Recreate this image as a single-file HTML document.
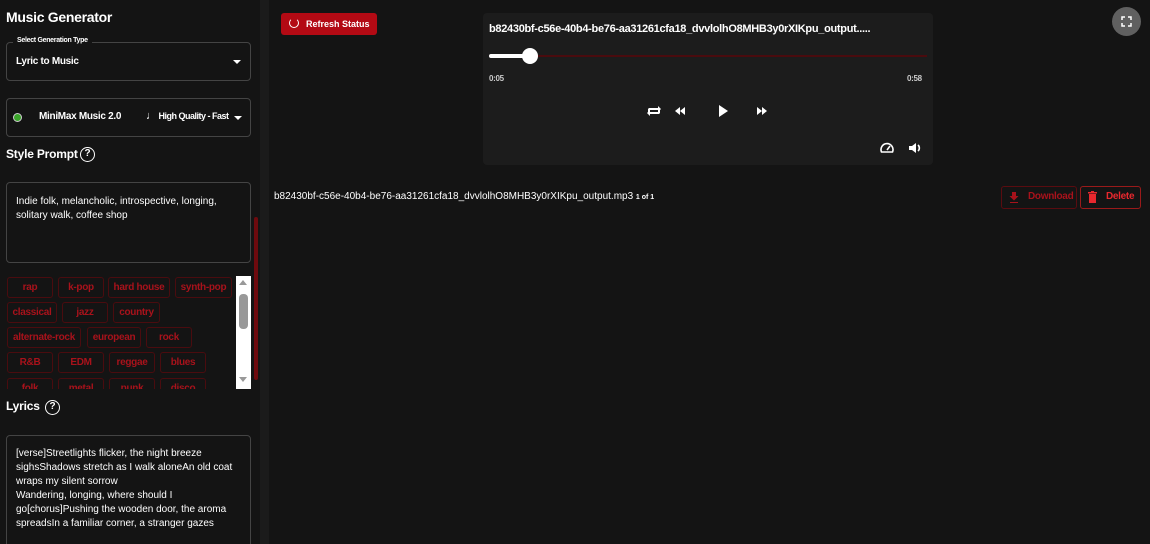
<!DOCTYPE html><html><head><style>
*{box-sizing:border-box;margin:0;padding:0}
html,body{width:1150px;height:544px;overflow:hidden}
body{background:#141414;font-family:"Liberation Sans",sans-serif;color:#fff;position:relative}
.a{position:absolute}
.box{position:absolute;border:1px solid #444;border-radius:4px}
.tag{position:absolute;height:21px;border:1px solid #4a0c0f;border-radius:3px;color:#a8121b;font-size:10px;font-weight:bold;text-align:center;line-height:19px;letter-spacing:-0.3px}
.t{font-weight:bold;letter-spacing:-0.3px}
</style></head><body>
<div class="a" style="left:260px;top:0;width:9px;height:544px;background:#1b1b1b"></div>
<div class="a" style="left:254px;top:217px;width:4px;height:163px;background:#6e0a0e;border-radius:2px"></div>
<div class="a t" style="left:6px;top:9px;font-size:14px">Music Generator</div>
<div class="box" style="left:6px;top:42px;width:245px;height:39px"></div>
<div class="a t" style="left:13px;top:37px;font-size:7px;background:#141414;padding:0 4px">Select Generation Type</div>
<div class="a t" style="left:16px;top:56px;font-size:10px">Lyric to Music</div>
<div class="a" style="left:233px;top:60px;border:4px solid transparent;border-top:4px solid #fff;border-bottom:0"></div>
<div class="box" style="left:6px;top:98px;width:245px;height:39px"></div>
<div class="a" style="left:13px;top:113px;width:9px;height:9px;border-radius:50%;background:#3aa52a;border:1px solid #ccc"></div>
<div class="a t" style="left:39px;top:111px;font-size:10px">MiniMax Music 2.0</div>
<div class="a t" style="left:146px;top:110px;font-size:9px;letter-spacing:-0.5px"><span style="font-size:11px">♩</span> High Quality - Fast</div>
<div class="a" style="left:234px;top:116px;border:4px solid transparent;border-top:4px solid #fff;border-bottom:0"></div>
<div class="a" style="left:6px;top:147px;font-size:12px;font-weight:bold;letter-spacing:-0.2px">Style Prompt</div>
<div class="a" style="left:80px;top:147px;width:15px;height:15px;border:1.5px solid #fff;border-radius:50%;font-size:10px;text-align:center;line-height:12px;font-weight:bold">?</div>
<div class="box" style="left:6px;top:182px;width:245px;height:81px"></div>
<div class="a" style="left:16px;top:195px;font-size:10px;line-height:14px;width:230px">Indie folk, melancholic, introspective, longing, solitary walk, coffee shop</div>
<div class="a" style="left:0;top:275px;width:236px;height:114px;overflow:hidden">
<div class="tag" style="left:7px;top:2px;width:46px">rap</div><div class="tag" style="left:58px;top:2px;width:46px">k-pop</div><div class="tag" style="left:108px;top:2px;width:62px">hard house</div><div class="tag" style="left:175px;top:2px;width:57px">synth-pop</div>
<div class="tag" style="left:7px;top:27px;width:50px">classical</div><div class="tag" style="left:62px;top:27px;width:46px">jazz</div><div class="tag" style="left:113px;top:27px;width:47px">country</div>
<div class="tag" style="left:7px;top:52px;width:74px">alternate-rock</div><div class="tag" style="left:87px;top:52px;width:54px">european</div><div class="tag" style="left:146px;top:52px;width:46px">rock</div>
<div class="tag" style="left:7px;top:77px;width:46px">R&amp;B</div><div class="tag" style="left:58px;top:77px;width:46px">EDM</div><div class="tag" style="left:109px;top:77px;width:46px">reggae</div><div class="tag" style="left:160px;top:77px;width:46px">blues</div>
<div class="tag" style="left:7px;top:103px;width:46px">folk</div><div class="tag" style="left:58px;top:103px;width:46px">metal</div><div class="tag" style="left:109px;top:103px;width:46px">punk</div><div class="tag" style="left:160px;top:103px;width:46px">disco</div>
</div>
<div class="a" style="left:236px;top:276px;width:15px;height:113px;background:#fff"></div>
<div class="a" style="left:239px;top:280px;border:4px solid transparent;border-bottom:5px solid #999;border-top:0"></div>
<div class="a" style="left:239px;top:294px;width:9px;height:35px;background:#999;border-radius:4px"></div>
<div class="a" style="left:239px;top:377px;border:4px solid transparent;border-top:5px solid #999;border-bottom:0"></div>
<div class="a" style="left:6px;top:399px;font-size:12px;font-weight:bold;letter-spacing:-0.2px">Lyrics</div>
<div class="a" style="left:45px;top:400px;width:15px;height:15px;border:1.5px solid #fff;border-radius:50%;font-size:10px;text-align:center;line-height:12px;font-weight:bold">?</div>
<div class="box" style="left:6px;top:435px;width:245px;height:115px"></div>
<div class="a" style="left:16px;top:447px;font-size:10px;line-height:14px;width:230px;height:84px;overflow:hidden">[verse]Streetlights flicker, the night breeze sighsShadows stretch as I walk aloneAn old coat wraps my silent sorrow<br>Wandering, longing, where should I go[chorus]Pushing the wooden door, the aroma spreadsIn a familiar corner, a stranger gazes</div>

<div class="a" style="left:281px;top:13px;width:96px;height:22px;background:#b30a14;border-radius:3px;font-size:9px;font-weight:bold;line-height:22px;padding-left:25px">Refresh Status</div>
<div class="a" style="left:289px;top:18px;width:10px;height:10px;border:1.5px solid #fff;border-radius:50%;border-top-color:transparent"></div>
<div class="a" style="left:483px;top:13px;width:450px;height:152px;background:#1c1c1c;border-radius:4px"></div>
<div class="a t" style="left:489px;top:23px;font-size:11px">b82430bf-c56e-40b4-be76-aa31261cfa18_dvvlolhO8MHB3y0rXIKpu_output.....</div>
<div class="a" style="left:489px;top:55px;width:438px;height:2px;background:#4a0b0e"></div>
<div class="a" style="left:489px;top:54px;width:40px;height:4px;background:#fff;border-radius:2px"></div>
<div class="a" style="left:522px;top:48px;width:16px;height:16px;background:#fff;border-radius:50%"></div>
<div class="a t" style="left:489px;top:74px;font-size:8px;color:#ccc">0:05</div>
<div class="a t" style="left:907px;top:74px;font-size:8px;color:#ccc">0:58</div>
<svg class="a" style="left:645px;top:102px" width="130" height="18" viewBox="0 0 130 18" fill="#fff">
<path d="M4 6h9v-2l3 3-3 3v-2H5v3H3V7zM14 12H5v2l-3-3 3-3v2h8V7h2v4z"/>
<path d="M40 5v8l-5-4zM35 5v8l-5-4z"/>
<path d="M74 3v12l9-6z"/>
<path d="M112 5v8l5-4zM117 5v8l5-4z"/>
</svg>
<svg class="a" style="left:879px;top:140px" width="44" height="16" viewBox="0 0 44 16" fill="none" stroke="#fff" stroke-width="1.6">
<path d="M2.5 12A6 6 0 1 1 13.5 12Z"/><path d="M8 10l3-4"/>
<path d="M30 6h3l4-3v10l-4-3h-3z" fill="#fff" stroke="none"/><path d="M39 5a4 4 0 0 1 0 6"/>
</svg>
<div class="a" style="left:1112px;top:7px;width:29px;height:29px;border-radius:50%;background:#606060"></div>
<svg class="a" style="left:1121px;top:16px" width="11" height="11" viewBox="0 0 11 11" fill="none" stroke="#fff" stroke-width="1.5"><path d="M1 4V1h3M7 1h3v3M10 7v3H7M4 10H1V7"/></svg>
<div class="a" style="left:274px;top:191px;font-size:10px">b82430bf-c56e-40b4-be76-aa31261cfa18_dvvlolhO8MHB3y0rXIKpu_output.mp3 <span style="font-size:7px;font-weight:bold">1 of 1</span></div>
<div class="a t" style="left:1001px;top:186px;width:76px;height:23px;border:1px solid #5a0c10;border-radius:3px;color:#a8121b;font-size:10px;line-height:20px;padding-left:26px">Download</div>
<svg class="a" style="left:1009px;top:192px" width="10" height="11" fill="#a8121b"><path d="M3 0h4v4h2.5L5 8.5 0.5 4H3zM1 10h8v1H1z"/></svg>
<div class="a t" style="left:1080px;top:186px;width:61px;height:23px;border:1px solid #9a1a1a;border-radius:3px;color:#e8282e;font-size:10px;line-height:20px;padding-left:25px">Delete</div>
<svg class="a" style="left:1088px;top:191px" width="9" height="12" fill="#e8282e"><path d="M0 1h9v1.5H0zM3 0h3v1H3zM1 3h7v9H1z"/></svg>
</body></html>
